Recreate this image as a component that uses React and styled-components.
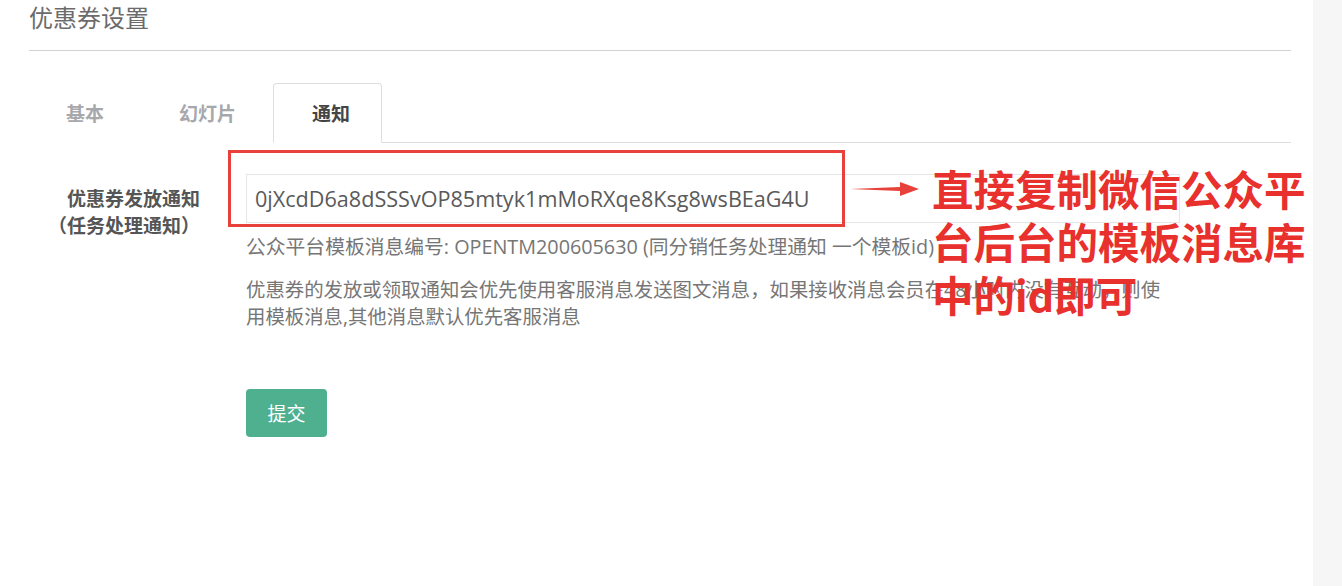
import React, { useState } from "react";
import styled, { createGlobalStyle } from "styled-components";

const GlobalStyle = createGlobalStyle`
  body {
    margin: 0;
    background: #fff;
    font-family: "Open Sans", "Noto Sans CJK SC", sans-serif;
  }
`;

const Page = styled.div`
  display: flex;
  min-height: 586px;
`;

const Main = styled.div`
  position: relative;
  flex: 1;
  padding: 0 22px 0 29px;
`;

const SideStrip = styled.div`
  width: 29px;
  background: #f6f6f6;
`;

const Title = styled.h3`
  margin: 0;
  padding-top: 3px;
  height: 47px;
  font-size: 24px;
  font-weight: 400;
  line-height: 30px;
  color: #6b6b6b;
  border-bottom: 1px solid #d2d2d2;
`;

const TabBar = styled.ul`
  display: flex;
  margin: 32px 0 0;
  padding: 0;
  list-style: none;
  border-bottom: 1px solid #dedede;
`;

const Tab = styled.li`
  height: 58px;
  margin-bottom: -1px;
  padding: 0 ${(p) => p.$padR}px 0 ${(p) => p.$padL}px;
  display: flex;
  align-items: center;
  font-size: 19px;
  font-weight: 700;
  cursor: pointer;
  color: ${(p) => (p.$active ? "#444" : "#a6a8ab")};
  background: #fff;
  border: 1px solid ${(p) => (p.$active ? "#dedede" : "transparent")};
  border-bottom-color: ${(p) => (p.$active ? "#fff" : "transparent")};
  border-radius: 4px 4px 0 0;
`;

const FormRow = styled.div`
  display: flex;
  padding-top: 31px;
`;

const Label = styled.label`
  width: 171px;
  padding-top: 12px;
  text-align: right;
  font-size: 19px;
  font-weight: 700;
  line-height: 27px;
  color: #555;
`;

const Field = styled.div`
  margin-left: 46px;
  width: 934px;
`;

const Input = styled.input`
  box-sizing: border-box;
  width: 100%;
  height: 49px;
  padding: 0 8px;
  font-family: "Open Sans", "Noto Sans CJK SC", sans-serif;
  font-size: 21.6px;
  color: #5a5a5a;
  border: 1px solid #e5e6e7;
  outline: none;
`;

const Help = styled.p`
  max-width: 926px;
  margin: ${(p) => p.$top}px 0 0;
  font-size: ${(p) => p.$size}px;
  line-height: 27px;
  color: #767676;
`;

const SubmitRow = styled.div`
  padding: 59px 0 0 217px;
`;

const Button = styled.button`
  width: 81px;
  height: 48px;
  border: none;
  border-radius: 4px;
  background: #4eb08f;
  color: #fff;
  font-family: "Open Sans", "Noto Sans CJK SC", sans-serif;
  font-size: 19px;
`;

const Highlight = styled.div`
  position: absolute;
  left: 228px;
  top: 150px;
  width: 611px;
  height: 71px;
  border: 3px solid #e8403a;
  pointer-events: none;
`;

const Arrow = styled.svg`
  position: absolute;
  left: 850px;
  top: 181px;
`;

const Note = styled.div`
  position: absolute;
  left: 932px;
  top: 162px;
  width: 380px;
  font-size: 41.5px;
  font-weight: 700;
  line-height: 53px;
  color: #e8302d;
  font-family: "Noto Sans CJK SC", sans-serif;
`;

const tabs = [
  { name: "基本", padL: 36, padR: 36 },
  { name: "幻灯片", padL: 37, padR: 36 },
  { name: "通知", padL: 38, padR: 31 },
];

export default function App() {
  const [active, setActive] = useState(2);
  const [value, setValue] = useState("0jXcdD6a8dSSSvOP85mtyk1mMoRXqe8Ksg8wsBEaG4U");

  return (
    <>
      <GlobalStyle />
      <Page>
        <Main>
          <Title>优惠券设置</Title>
          <TabBar>
            {tabs.map((t, i) => (
              <Tab
                key={t.name}
                $padL={t.padL}
                $padR={t.padR}
                $active={i === active}
                onClick={() => setActive(i)}
              >
                {t.name}
              </Tab>
            ))}
          </TabBar>
          <FormRow>
            <Label>
              优惠券发放通知
              <br />
              （任务处理通知）
            </Label>
            <Field>
              <Input value={value} onChange={(e) => setValue(e.target.value)} />
              <Help $top={10} $size={19.8}>
                公众平台模板消息编号: OPENTM200605630 (同分销任务处理通知 一个模板id)
              </Help>
              <Help $top={16} $size={19.4}>
                优惠券的发放或领取通知会优先使用客服消息发送图文消息，如果接收消息会员在48小时内没有互动，则使用模板消息,其他消息默认优先客服消息
              </Help>
            </Field>
          </FormRow>
          <SubmitRow>
            <Button>提交</Button>
          </SubmitRow>

          <Highlight />
          <Arrow width="70" height="16" viewBox="0 0 70 16">
            <polygon points="0,8 50,6 50,1 69,8 50,15 50,10" fill="#e8403a" />
          </Arrow>
          <Note>直接复制微信公众平台后台的模板消息库中的id即可</Note>
        </Main>
        <SideStrip />
      </Page>
    </>
  );
}
